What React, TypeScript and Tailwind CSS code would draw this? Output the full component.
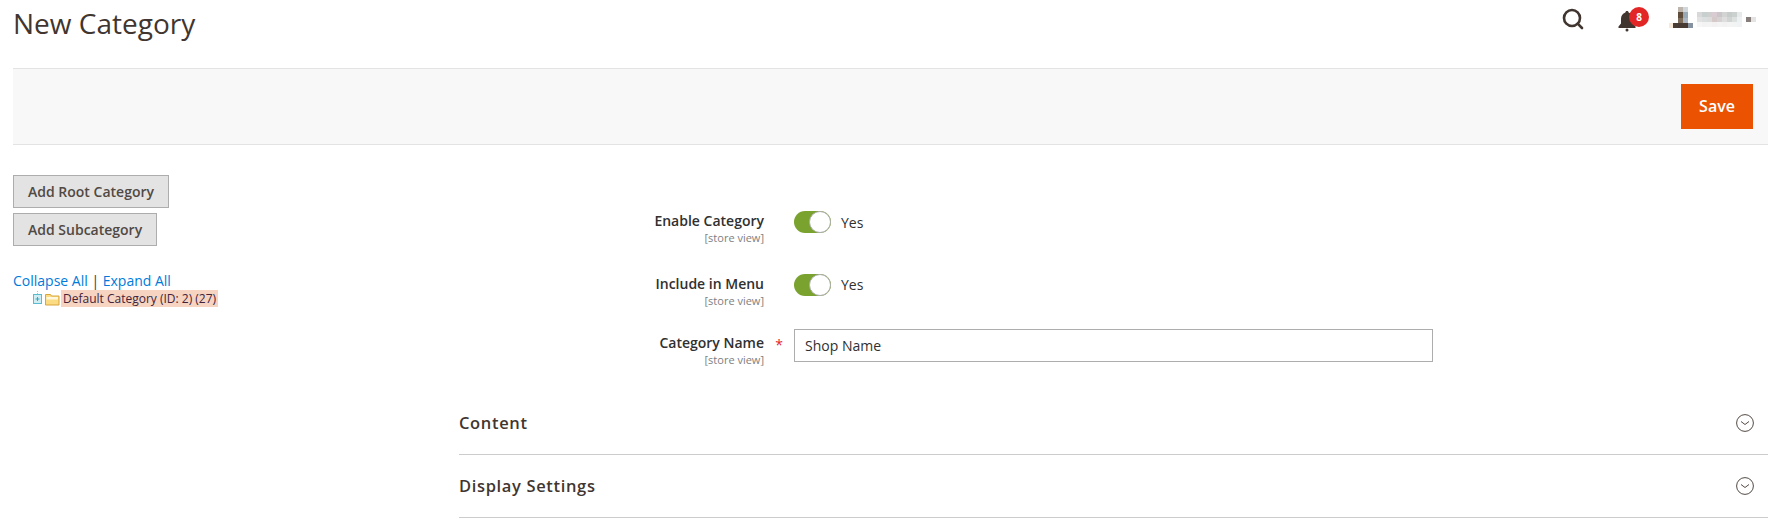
import { Search } from "lucide-react";

const font = "font-['Open_Sans',sans-serif]";

function StoreLabel({ label, required }: { label: string; required?: boolean }) {
  return (
    <div className="relative w-[305px] shrink-0 text-right">
      <div className="text-[14px] leading-[19px] font-semibold text-[#303030]">{label}</div>
      <div className="text-[11px] leading-[15px] text-[#808080]">[store view]</div>
      {required && <span className="absolute top-[2px] -right-[19px] text-[14px] leading-[19px] text-[#e22626]">*</span>}
    </div>
  );
}

function Toggle({ label }: { label: string }) {
  return (
    <div className="flex items-start">
      <StoreLabel label={label} />
      <div className="ml-[30px] flex items-center">
        <div className="flex h-[22px] w-[37px] justify-end rounded-full bg-[#79a22e]">
          <div className="h-[22px] w-[22px] rounded-full border border-[#adadad] bg-white" />
        </div>
        <span className="ml-[10px] text-[14px] text-[#303030]">Yes</span>
      </div>
    </div>
  );
}

function Section({ title }: { title: string }) {
  return (
    <div className="flex h-[63px] items-center justify-between border-b border-[#cccccc] pt-[1px] pr-[14px]">
      <h3 className="text-[16.5px] font-semibold tracking-[0.65px] text-[#41362f]">{title}</h3>
      <svg width="18" height="18" viewBox="0 0 18 18" fill="none" stroke="#41362f">
        <circle cx="9" cy="9" r="8.4" strokeWidth="0.9" />
        <path d="M5 7.5 L9 10.5 L13 7.5" strokeWidth="0.9" />
      </svg>
    </div>
  );
}

// blurred user name in the header, kept as a mosaic
const mosaic: [number, number, number, number, string][] = [
  [9, 0, 5, 5, "#bdb5ac"], [14, 0, 5, 5, "#cfd6dc"],
  [9, 5, 5, 6, "#5f4c3a"], [14, 5, 5, 6, "#9aa9b6"],
  [9, 11, 5, 5, "#7d6c5a"], [14, 11, 5, 5, "#aab7c2"],
  [0, 16, 4, 5, "#f7ead9"], [4, 16, 5, 5, "#4a3d36"], [9, 16, 10, 5, "#463a33"], [19, 16, 5, 5, "#8792a0"],
  [28, 5, 5, 5, "#d8d8d8"], [33, 5, 5, 5, "#c8cfcf"], [38, 5, 5, 5, "#cfcfcf"], [43, 5, 5, 5, "#d8cbd2"], [48, 5, 5, 5, "#c9c5c8"], [53, 5, 5, 5, "#d2d4d4"], [58, 5, 5, 5, "#c6ccc9"], [63, 5, 5, 5, "#cbd1cf"], [68, 5, 5, 5, "#e6eaea"],
  [28, 10, 5, 5, "#e2e2e2"], [33, 10, 5, 5, "#dcdfe0"], [38, 10, 5, 5, "#dcdcdc"], [43, 10, 5, 5, "#d5c9c9"], [48, 10, 5, 5, "#d6d2d4"], [53, 10, 5, 5, "#dedede"], [58, 10, 5, 5, "#d0d4d2"], [63, 10, 5, 5, "#dde2e0"], [68, 10, 5, 5, "#eef1f1"],
  [28, 15, 5, 5, "#f6f6f6"], [33, 15, 5, 5, "#f3f3f3"], [38, 15, 5, 5, "#f4f4f4"], [43, 15, 5, 5, "#f3f1f2"], [48, 15, 5, 5, "#f4f4f4"], [53, 15, 5, 5, "#f2f2f2"], [58, 15, 5, 5, "#f4f4f4"], [63, 15, 5, 5, "#f2f4f4"], [68, 15, 5, 5, "#f0f3f6"],
  [77, 10, 5, 5, "#857e7a"], [82, 10, 5, 5, "#e4e2e2"],
];

export default function App() {
  return (
    <div className={`h-[519px] w-[1777px] overflow-hidden bg-white ${font}`}>
      <header className="flex h-[68px] items-start justify-between pr-[21px] pl-[13px]">
        <h1 className="text-[28px] leading-[46px] font-normal text-[#41362f]">New Category</h1>
        <div className="flex items-start pt-[7px]">
          <Search className="h-[24px] w-[24px] text-[#41362f]" strokeWidth={2.6} />
          <div className="relative ml-[33px] h-[24px] w-[30px]">
            <svg width="18" height="22" viewBox="0 0 18 22" className="absolute top-[4px] left-0" fill="#41362f">
              <path d="M9 0c1 0 1.600.7 1.600 1.600C13.500 2.400 15 5 15 8v4.500l2.500 3V17H.5v-1.500l2.500-3V8c0-3 1.500-5.600 4.400-6.400C7.400.7 8 0 9 0z" />
              <circle cx="9" cy="19" r="1.500" />
            </svg>
            <span className="absolute top-0 left-[11px] flex h-[20px] w-[20px] items-center justify-center rounded-full bg-[#e22626] text-[10px] font-bold text-white">8</span>
          </div>
          <svg width="87" height="21" viewBox="0 0 87 21" className="mt-0 ml-[21px]">
            {mosaic.map(([x, y, w, h, fill], i) => (
              <rect key={i} x={x} y={y} width={w} height={h} fill={fill} />
            ))}
          </svg>
        </div>
      </header>

      <div className="mr-[9px] ml-[13px] flex h-[77px] items-center justify-end border-y border-[#e3e3e3] bg-[#f8f8f8] pr-[15px]">
        <button className="h-[45px] w-[72px] bg-[#eb5202] pb-[1px] text-[16px] font-semibold text-white">Save</button>
      </div>

      <main className="mt-[30px] mr-[9px] ml-[13px] flex">
        <aside className="w-[446px] shrink-0">
          <div className="flex flex-col items-start gap-[5px]">
            <button className="h-[33px] border border-[#adadad] bg-[#e3e3e3] px-[14px] text-[14px] font-semibold text-[#514943]">Add Root Category</button>
            <button className="h-[33px] border border-[#adadad] bg-[#e3e3e3] px-[14px] text-[14px] font-semibold text-[#514943]">Add Subcategory</button>
          </div>
          <div className="mt-[25px] text-[14px] leading-[19px] text-[#007bdb]">
            Collapse All <span className="text-[#41362f]">|</span> Expand All
          </div>
          <div className="flex h-[17px] items-center pl-[20px]">
            <svg width="28" height="16" viewBox="0 0 28 16">
              <path d="M4.500 0v3" stroke="#9cc" strokeDasharray="1 1" />
              <rect x="0.500" y="3.500" width="8" height="9" fill="#cfeef4" stroke="#5bbccf" />
              <path d="M2.500 8h4M4.500 6v4" stroke="#3ba5bd" />
              <path d="M12.500 3.500h5l1 1.500h7.500v9h-13.500z" fill="#fbdc82" stroke="#d9a53c" />
              <path d="M13.500 6h11.500v2.500H13.500z" fill="#fff8de" />
            </svg>
            <span className="bg-[#f6d4c1] px-[2px] text-[12px] leading-[17px] text-[#41233c]">Default Category (ID: 2) (27)</span>
          </div>
        </aside>

        <section className="min-w-0 flex-1">
          <div className="flex flex-col gap-[28.500px] pt-[36px]">
            <Toggle label="Enable Category" />
            <Toggle label="Include in Menu" />
          </div>
          <div className="mt-[25px] flex items-start">
            <StoreLabel label="Category Name" required />
            <div className="ml-[30px] flex h-[33px] w-[639px] -translate-y-[4px] items-center border border-[#adadad] bg-white px-[10px] text-[14px] text-[#303030]">Shop Name</div>
          </div>
          <div className="mt-[25px]">
            <Section title="Content" />
            <Section title="Display Settings" />
          </div>
        </section>
      </main>
    </div>
  );
}
